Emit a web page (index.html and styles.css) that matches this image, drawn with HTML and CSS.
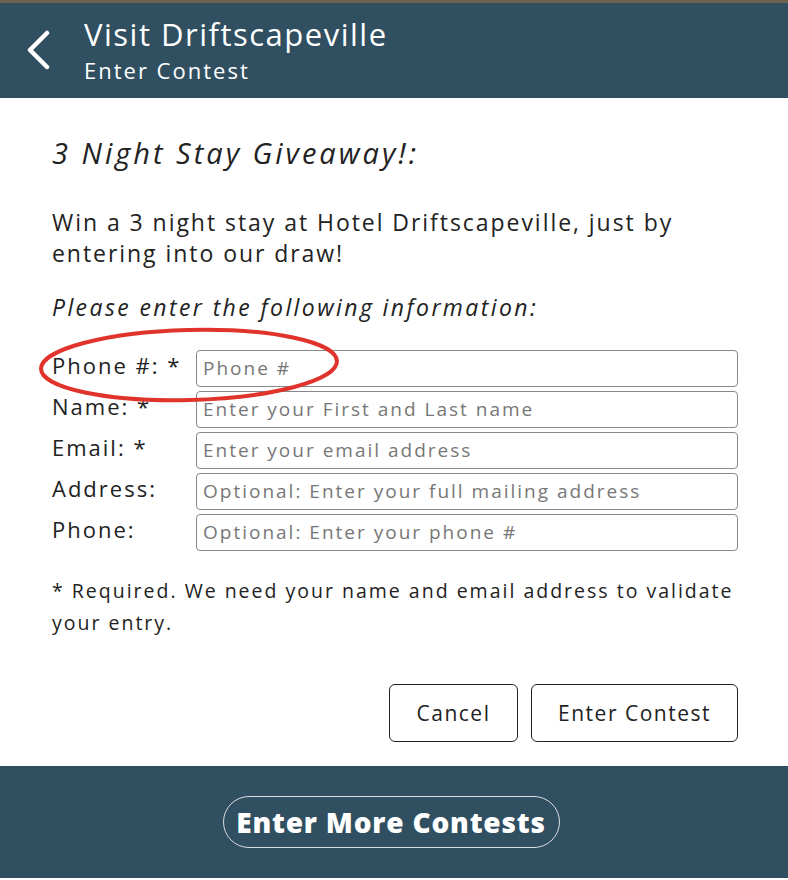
FILE: index.html
```html
<!DOCTYPE html>
<html>
<head>
<meta charset="utf-8">
<link rel="stylesheet" href="styles.css">
</head>
<body>
<div class="page">
  <header class="topbar">
    <svg class="back" width="28" height="40" viewBox="0 0 28 40"><path d="M22 3 L5 20 L22 37" fill="none" stroke="#fff" stroke-width="4.5" stroke-linecap="round" stroke-linejoin="round"/></svg>
    <div class="titles">
      <div class="t1">Visit Driftscapeville</div>
      <div class="t2">Enter Contest</div>
    </div>
  </header>
  <main class="content">
    <h1 class="heading">3 Night Stay Giveaway!:</h1>
    <p class="intro">Win a 3 night stay at Hotel Driftscapeville, just by entering into our draw!</p>
    <p class="prompt">Please enter the following information:</p>
    <div class="form">
      <svg class="ellipse" width="320" height="110" viewBox="0 0 320 110"><ellipse cx="151" cy="55" rx="148" ry="35" transform="rotate(-1.5 151 55)" fill="none" stroke="#e0332b" stroke-width="4"/></svg>
      <label class="lbl">Phone #: *</label><div class="field">Phone #</div>
      <label class="lbl">Name: *</label><div class="field">Enter your First and Last name</div>
      <label class="lbl">Email: *</label><div class="field">Enter your email address</div>
      <label class="lbl">Address:</label><div class="field">Optional: Enter your full mailing address</div>
      <label class="lbl">Phone:</label><div class="field">Optional: Enter your phone #</div>
    </div>
    <p class="note">* Required. We need your name and email address to validate your entry.</p>
    <div class="actions">
      <button class="btn cancel">Cancel</button>
      <button class="btn enter">Enter Contest</button>
    </div>
  </main>
  <footer class="footer">
    <button class="more">Enter More Contests</button>
  </footer>
</div>
</body>
</html>
```
FILE: styles.css
```css
html, body { margin: 0; padding: 0; }
body { font-family: "Open Sans", "Lato", sans-serif; color: #222; width: 788px; height: 880px; overflow: hidden; background: #e8e8e8; }
.page { width: 788px; height: 880px; display: flex; flex-direction: column; background: #fff; }
.topbar { height: 98px; background: #304f61; border-top: 3px solid #6b6350; box-sizing: border-box; display: flex; align-items: flex-start; padding-left: 25px; color: #fff; flex-shrink: 0; }
.back { margin-right: 31px; align-self: center; margin-top: -2px; }
.titles { display: flex; flex-direction: column; padding-top: 10px; }
.t1 { font-size: 31px; line-height: 42px; letter-spacing: 1.5px; }
.t2 { font-size: 22px; line-height: 30px; letter-spacing: 2px; }
.content { flex: 1; padding: 0 50px 0 52px; display: flex; flex-direction: column; }
.heading { font-size: 29px; font-style: italic; font-weight: 400; margin: 37px 0 0; line-height: 36px; letter-spacing: 3px; }
.intro { font-size: 23px; line-height: 31px; margin: 36px 0 0; letter-spacing: 1.95px; }
.prompt { font-size: 23px; font-style: italic; line-height: 31px; margin: 23px 0 0; letter-spacing: 2.4px; }
.form { position: relative; display: grid; grid-template-columns: 144px 1fr; row-gap: 4px; margin-top: 27px; }
.ellipse { position: absolute; left: -14px; top: -40px; pointer-events: none; }
.lbl { font-size: 22px; line-height: 30px; letter-spacing: 2px; height: 37px; white-space: nowrap; }
.field { height: 37px; box-sizing: border-box; border: 1.5px solid #888; border-radius: 4px; font-size: 19px; color: #777; padding: 3px 6px; line-height: 28px; letter-spacing: 2px; white-space: nowrap; overflow: hidden; }
.note { font-size: 19.5px; line-height: 32px; margin: 24px 0 0; letter-spacing: 2px; }
.actions { display: flex; justify-content: flex-end; gap: 13px; margin-top: 45px; }
.btn { font-family: inherit; background: #fff; color: #222; border: 1.5px solid #222; border-radius: 6px; height: 58px; font-size: 21px; letter-spacing: 1.5px; padding: 0; }
.cancel { width: 129px; }
.enter { width: 207px; }
.footer { height: 112px; margin-bottom: 2px; background: #304f61; display: flex; align-items: center; justify-content: center; flex-shrink: 0; }
.more { font-family: inherit; font-size: 28px; font-weight: 800; color: #fff; background: transparent; border: 1.5px solid #ddd; border-radius: 26px; height: 52px; width: 337px; margin-left: -6px; letter-spacing: 0.8px; padding: 0; }
```
